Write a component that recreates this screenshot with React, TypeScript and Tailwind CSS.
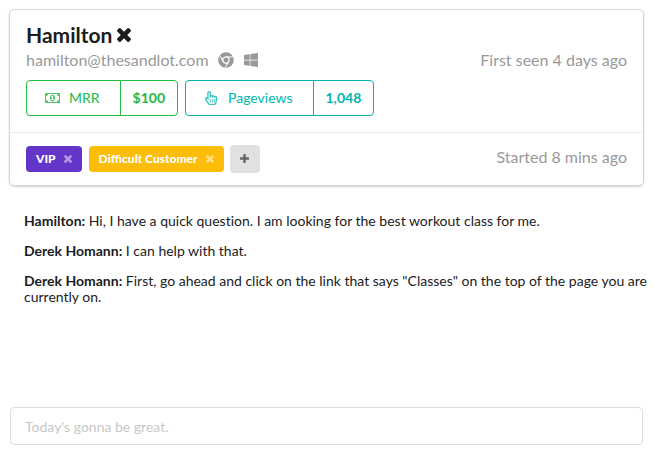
import type { ReactNode } from "react";
import { FaChrome, FaRegHandPointer, FaWindows } from "react-icons/fa";

function TimesIcon({ className }: { className: string }) {
  return (
    <svg viewBox="302 366 1188 1188" fill="currentColor" className={className} aria-hidden="true">
      <path d="M1490 1322q0 40-28 68l-136 136q-28 28-68 28t-68-28l-294-294-294 294q-28 28-68 28t-68-28l-136-136q-28-28-28-68t28-68l294-294-294-294q-28-28-28-68t28-68l136-136q28-28 68-28t68 28l294 294 294-294q28-28 68-28t68 28l136 136q28 28 28 68t-28 68l-294 294 294 294q28 28 28 68z" />
    </svg>
  );
}

function PlusIcon() {
  return (
    <svg viewBox="192 128 1408 1408" fill="currentColor" className="size-[9px]" aria-hidden="true">
      <path d="M1600 736v192q0 40-28 68t-68 28h-416v416q0 40-28 68t-68 28h-192q-40 0-68-28t-28-68v-416h-416q-40 0-68-28t-28-68v-192q0-40 28-68t68-28h416v-416q0-40 28-68t68-28h192q40 0 68 28t28 68v416h416q40 0 68 28t28 68z" />
    </svg>
  );
}

function MoneyIcon() {
  return (
    <svg viewBox="0 256 1920 1280" fill="currentColor" className="h-[10px] w-[15px]" aria-hidden="true">
      <path d="M768 1152h384v-96h-128v-448h-114l-148 137 77 80q42-37 55-57h2v288h-128v96zm512-256q0 70-21 142t-59.5 134-101.5 101-138 39-138-39-101.5-101-59.5-134-21-142 21-142 59.5-134 101.5-101 138-39 138 39 101.5 101 59.5 134 21 142zm512 256v-512q-106 0-181-75t-75-181h-1152q0 106-75 181t-181 75v512q106 0 181 75t75 181h1152q0-106 75-181t181-75zm128-832v1152q0 26-19 45t-45 19h-1792q-26 0-45-19t-19-45v-1152q0-26 19-45t45-19h1792q26 0 45 19t19 45z" />
    </svg>
  );
}

function Stat({ icon, label, value, tone }: { icon: ReactNode; label: string; value: string; tone: string }) {
  return (
    <button type="button" className={`flex h-9 items-stretch rounded border text-sm ${tone}`}>
      <span className="flex items-center gap-[9px] border-r border-inherit pr-5 pl-[17px]">
        <span className="flex w-4 justify-center opacity-80">{icon}</span>
        {label}
      </span>
      <span className="flex items-center px-3 font-bold">{value}</span>
    </button>
  );
}

function Tag({ name, tone }: { name: string; tone: string }) {
  return (
    <span className={`flex h-[26px] items-center gap-2 rounded px-[10px] text-xs font-black text-white ${tone}`}>
      {name}
      <button type="button" aria-label={`Remove ${name}`} className="opacity-50">
        <TimesIcon className="size-2" />
      </button>
    </span>
  );
}

const messages = [
  { author: "Hamilton", text: "Hi, I have a quick question. I am looking for the best workout class for me." },
  { author: "Derek Homann", text: "I can help with that." },
  {
    author: "Derek Homann",
    text: 'First, go ahead and click on the link that says "Classes" on the top of the page you are currently on.',
  },
];

export default function App() {
  return (
    <main className="bg-white py-[9px] pr-[14px] pl-[9px] font-['Lato','Liberation_Sans',sans-serif] text-[#1b1c1d]">
      <section className="mr-[9px] rounded-[5px] border border-[#d4d4d5] shadow-[0_1px_2px_#d4d4d5]">
        <div className="px-4 pt-[11px] pb-4">
          <h1 className="flex items-center gap-[5px] text-[21px] leading-7 font-bold">
            Hamilton
            <button type="button" aria-label="Close conversation">
              <TimesIcon className="size-[14px]" />
            </button>
          </h1>
          <div className="flex items-center justify-between text-[16px] leading-[22px] text-[#999]">
            <div className="flex items-center gap-[9px]">
              <span>hamilton@thesandlot.com</span>
              <FaChrome className="size-4" />
              <FaWindows className="size-4" />
            </div>
            <span>First seen 4 days ago</span>
          </div>
          <div className="mt-[9px] flex gap-[7px]">
            <Stat icon={<MoneyIcon />} label="MRR" value="$100" tone="border-[#21ba45] text-[#21ba45]" />
            <Stat
              icon={<FaRegHandPointer className="size-[14px]" />}
              label="Pageviews"
              value="1,048"
              tone="border-[#00b5ad] text-[#00b5ad]"
            />
          </div>
        </div>
        <div className="flex items-start justify-between border-t border-[#eee] px-4 py-3">
          <div className="flex items-center gap-[6px]">
            <div className="flex items-center gap-[7px]">
              <Tag name="VIP" tone="bg-[#6435c9]" />
              <Tag name="Difficult Customer" tone="bg-[#fbbd08]" />
            </div>
            <button
              type="button"
              aria-label="Add tag"
              className="flex h-7 w-[30px] items-center justify-center rounded bg-[#e0e1e2] pb-[2px] text-[#666]"
            >
              <PlusIcon />
            </button>
          </div>
          <span className="text-[16px] leading-6 text-[#999]">Started 8 mins ago</span>
        </div>
      </section>
      <section className="flex min-h-[221px] flex-col gap-[14px] pt-[27px] pl-[15px] text-sm leading-4 [font-variant-ligatures:no-common-ligatures]">
        {messages.map((message, index) => (
          <p key={index}>
            <strong>{message.author}:</strong> {message.text}
          </p>
        ))}
      </section>
      <div className="mr-[10px] ml-px">
        <input
          type="text"
          aria-label="Message"
          placeholder="Today's gonna be great."
          className="h-[38px] w-full rounded border border-[#dededf] px-[14px] text-sm placeholder:text-[#c7c7c7]"
        />
      </div>
    </main>
  );
}
